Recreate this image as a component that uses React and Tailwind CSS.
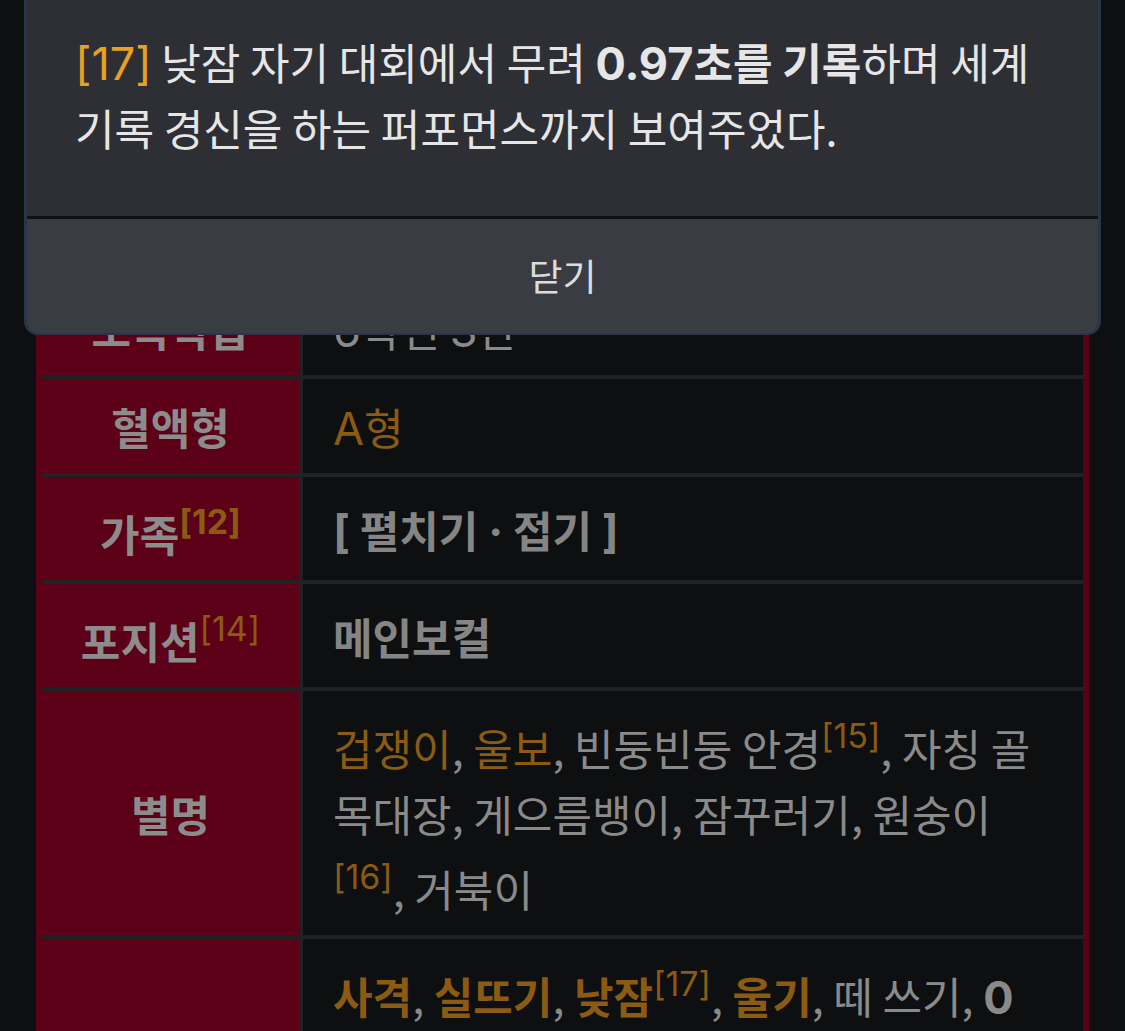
import React from "react";

const L = ({ children, bold = false }) => (
  <span
    className={
      "font-['Inter','Noto_Sans_CJK_KR',sans-serif] text-[45px] leading-none " +
      (bold ? "font-bold" : "font-normal")
    }
  >
    {children}
  </span>
);

const Sup = ({ children, bold = false }) => (
  <span
    className={
      "font-['Inter','Noto_Sans_CJK_KR',sans-serif] text-[34px] leading-[61px] align-[18px] text-[#8a5b10] " +
      (bold ? "font-bold" : "font-normal")
    }
  >
    {children}
  </span>
);

const Gold = ({ children, bold = false }) => (
  <span className={"text-[#8a5b10] " + (bold ? "font-bold" : "")}>{children}</span>
);

const Th = ({ children }) => (
  <div className="flex items-center justify-center bg-[#5b0016] py-[14px] font-bold leading-[66px] text-[#8c8c8c]">
    <div className="whitespace-nowrap text-center">{children}</div>
  </div>
);

const Td = ({ children }) => (
  <div className="flex items-center bg-[#0e0f11] py-[14px] pl-[30px] pr-[6px] leading-[66px] text-[#8a8a8a]">
    <div className="whitespace-nowrap">{children}</div>
  </div>
);

export default function App() {
  return (
    <div className="relative h-[1031px] overflow-hidden bg-[#0e0f11] font-['Noto_Sans_CJK_KR',sans-serif] text-[43px]">
      {/* table */}
      <div className="mx-[36px] bg-[#5b0016] px-[6px]">
        <div className="grid grid-cols-[257px_1fr] gap-[4px] bg-[#202225]">
          <div className="col-span-2 flex h-[81px] items-center justify-center bg-[#5b0016] font-bold text-[#8c8c8c]">
            프로필
          </div>
          <Th>생일</Th>
          <Td>
            <L>4</L>월 <L>1</L>일
          </Td>
          <Th>나이</Th>
          <Td>
            <L>12</L>세
          </Td>
          <Th>소속학급</Th>
          <Td>
            <L>6</L>학년 <L>3</L>반
          </Td>
          <Th>혈액형</Th>
          <Td>
            <Gold>
              <L>A</L>형
            </Gold>
          </Td>
          <Th>
            가족<Sup bold>[12]</Sup>
          </Th>
          <Td>
            <span className="font-bold text-[#858585]">
              <L bold>[</L> 펼치기 <L bold>·</L> 접기 <L bold>]</L>
            </span>
          </Td>
          <Th>
            포지션<Sup>[14]</Sup>
          </Th>
          <Td>
            <span className="font-bold text-[#858585]">메인보컬</span>
          </Td>
          <Th>별명</Th>
          <Td>
            <Gold>겁쟁이</Gold>, <Gold>울보</Gold>, 빈둥빈둥 안경<Sup>[15]</Sup>, 자칭 골
            <br />
            목대장, 게으름뱅이, 잠꾸러기, 원숭이
            <br />
            <Sup>[16]</Sup>, 거북이
          </Td>
          <Th>특기</Th>
          <Td>
            <Gold bold>사격</Gold>, <Gold bold>실뜨기</Gold>, <Gold bold>낮잠</Gold>
            <Sup>[17]</Sup>, <Gold bold>울기</Gold>, 떼 쓰기,{" "}
            <span className="font-bold">
              <L bold>0</L>
            </span>
            <br />
            <span className="font-bold">
              <L bold>.97</L>초 만에 잠들기
            </span>
            <br />
            숨바꼭질
          </Td>
        </div>
      </div>

      {/* popup */}
      <div className="absolute left-[24px] right-[24px] top-0 overflow-hidden rounded-b-[14px] border-x-[3px] border-b-[2px] border-[#2b3548] bg-[#2e2f35]">
        <div className="whitespace-nowrap pb-[56px] pl-[48px] pr-[10px] pt-[28px] leading-[66px] text-[#e6e6e6]">
          <span className="text-[#eaa11e]">
            <L>[17]</L>
          </span>{" "}
          낮잠 자기 대회에서 무려{" "}
          <span className="font-bold">
            <L bold>0.97</L>초를 기록
          </span>
          하며 세계
          <br />
          기록 경신을 하는 퍼포먼스까지 보여주었다.
        </div>
        <div className="h-[3px] bg-[#111214]" />
        <div className="flex h-[114px] items-center justify-center bg-[#393c42] text-[37px] text-[#dcdcdc]">
          닫기
        </div>
      </div>
    </div>
  );
}
